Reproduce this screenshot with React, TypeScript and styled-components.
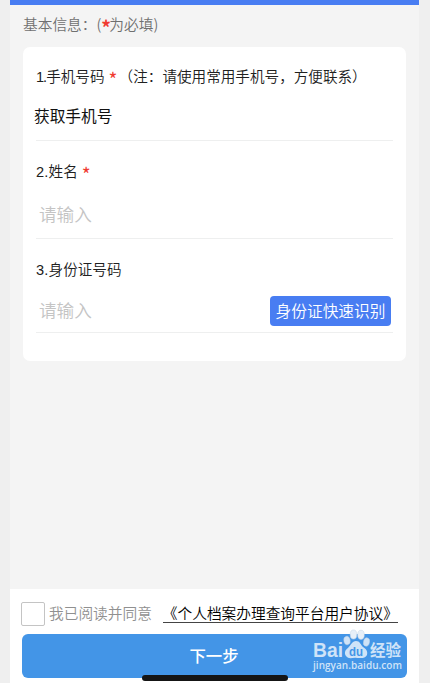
import React from "react";
import styled, { createGlobalStyle } from "styled-components";

const GlobalStyle = createGlobalStyle`
  * { box-sizing: border-box; }
  body {
    margin: 0;
    background: #efefef;
    font-family: "Liberation Sans", "Noto Sans CJK SC", sans-serif;
    overflow: hidden;
  }
`;

const Screen = styled.div`
  width: 409px;
  height: 683px;
  margin-left: 10px;
  display: flex;
  flex-direction: column;
  background: #f4f4f4;
  border-top: 5px solid #487df2;
`;

const Heading = styled.div`
  height: 42px;
  padding-left: 13px;
  font-family: "Noto Sans CJK SC", sans-serif;
  font-weight: 350;
  font-size: 14.7px;
  line-height: 38px;
  color: #707070;
  white-space: nowrap;
`;

const Star = styled.span<{ $bold?: boolean }>`
  display: inline-block;
  width: ${(p) => (p.$bold ? 8 : 9)}px;
  font-family: "Noto Sans CJK SC", sans-serif;
  font-size: 19px;
  font-weight: ${(p) => (p.$bold ? 700 : 400)};
  color: #f03a30;
  line-height: 10px;
  height: 10px;
  vertical-align: -5px;
`;

const Ordinal = styled.span<{ $narrow?: boolean }>`
  letter-spacing: ${(p) => (p.$narrow ? -1 : 0.2)}px;
`;

const Note = styled.span`
  margin-left: 1px;
`;

const Card = styled.main`
  width: 383px;
  height: 314px;
  margin-left: 13px;
  padding: 0 13px;
  border-radius: 7px;
  background: #fff;
`;

const Field = styled.section<{ $height: number }>`
  display: flex;
  flex-direction: column;
  height: ${(p) => p.$height}px;
  border-bottom: 1px solid #eeefef;
`;

const Label = styled.div<{ $top: number }>`
  height: 20px;
  margin-top: ${(p) => p.$top}px;
  font-size: 14.6px;
  font-weight: 350;
  line-height: 20px;
  color: #202020;
  white-space: pre;
`;

const PhoneValue = styled.div`
  margin: 18px 0 0 -2px;
  font-size: 15.7px;
  line-height: 24px;
  color: #111;
`;

const InputRow = styled.div<{ $top: number }>`
  display: flex;
  align-items: center;
  justify-content: space-between;
  height: 30px;
  margin-top: ${(p) => p.$top}px;
  padding: 0 2px 0 3px;
`;

const Input = styled.input`
  width: 180px;
  height: 26px;
  margin-bottom: 4px;
  padding: 0;
  border: 0;
  outline: 0;
  background: transparent;
  font: 350 17.6px "Noto Sans CJK SC", sans-serif;
  &::placeholder { color: #c4c4c4; }
`;

const ScanButton = styled.button`
  width: 121px;
  height: 30px;
  padding: 0;
  border: 0;
  border-radius: 4px;
  background: #487df2;
  color: #fff;
  font: 350 15.7px/28px "Noto Sans CJK SC", sans-serif;
  white-space: nowrap;
`;

const Footer = styled.footer`
  position: relative;
  height: 94px;
  margin-top: auto;
  padding: 12px 12px 0;
  background: #fff;
`;

const Agreement = styled.label`
  display: flex;
  align-items: center;
  height: 26px;
  margin-left: -1px;
  font-size: 14.7px;
  font-weight: 350;
  white-space: nowrap;
  color: #909090;
`;

const AgreementText = styled.span`
  height: 20px;
  line-height: 20px;
`;

const Checkbox = styled.input`
  appearance: none;
  width: 24px;
  height: 24px;
  margin: 0 4px 0 0;
  border: 1px solid #c4c4c4;
  border-radius: 2px;
  background: #fff;
`;

const AgreementLink = styled.a`
  height: 19px;
  margin: 0 0 2px 11px;
  border-bottom: 1px solid #444;
  line-height: 21px;
  color: #000;
`;

const NextButton = styled.button`
  display: block;
  width: 385px;
  height: 44px;
  margin-top: 7px;
  padding: 0 1px 2px 0;
  border: 0;
  border-radius: 6px;
  background: #4395e7;
  color: #fff;
  font: 500 16.4px/42px "Noto Sans CJK SC", sans-serif;
`;

const HomeIndicator = styled.div`
  position: absolute;
  left: 132px;
  bottom: 2px;
  width: 146px;
  height: 6px;
  border-radius: 3px;
  background: #151515;
`;

const Watermark = styled.svg`
  position: absolute;
  left: 300px;
  top: 39px;
  width: 98px;
  height: 50px;
`;

export default function App() {
  return (
    <>
      <GlobalStyle />
      <Screen>
        <Heading>基本信息：(<Star $bold>*</Star>为必填)</Heading>
        <Card>
          <Field $height={94}>
            <Label $top={20}>
              <Ordinal $narrow>1.</Ordinal>手机号码 <Star>*</Star>
              <Note>（注：请使用常用手机号，方便联系）</Note>
            </Label>
            <PhoneValue>获取手机号</PhoneValue>
          </Field>
          <Field $height={98}>
            <Label $top={21}><Ordinal>2.</Ordinal>姓名 <Star>*</Star></Label>
            <InputRow $top={18}><Input placeholder="请输入" /></InputRow>
          </Field>
          <Field $height={94}>
            <Label $top={21}><Ordinal>3.</Ordinal>身份证号码</Label>
            <InputRow $top={16}>
              <Input placeholder="请输入" />
              <ScanButton>身份证快速识别</ScanButton>
            </InputRow>
          </Field>
        </Card>
        <Footer>
          <Agreement>
            <Checkbox type="checkbox" />
            <AgreementText>我已阅读并同意</AgreementText>
            <AgreementLink>《个人档案办理查询平台用户协议》</AgreementLink>
          </Agreement>
          <NextButton>下一步</NextButton>
          <HomeIndicator />
          <Watermark viewBox="310 628 98 50" fill="#cfe3f8">
            <text x="313" y="656.5" fontFamily="Liberation Sans" fontWeight="700" fontSize="20" textLength="30" lengthAdjust="spacingAndGlyphs">Bai</text>
            <g stroke="#c3d3e4" strokeWidth="0.5">
              <ellipse cx="347" cy="640.5" rx="3.1" ry="4.2" transform="rotate(-12 347 640.5)" />
              <ellipse cx="353.5" cy="634.5" rx="3.3" ry="4.6" fill="#e7eff8" />
              <ellipse cx="361" cy="634.8" rx="3.3" ry="4.6" fill="#e7eff8" />
              <ellipse cx="366.5" cy="642" rx="3" ry="4.2" transform="rotate(12 366.5 642)" />
            </g>
            <path d="M356 641c-4 0-5 4-8 7-3 2-4 5-2 8 3 4 7 1 11 2 4 0 8 1 10-3 1-4-1-6-4-8-3-3-3-6-7-6Z" />
            <text x="349" y="655.5" fill="#4395e7" fontFamily="Liberation Sans" fontWeight="700" fontSize="12" textLength="14" lengthAdjust="spacingAndGlyphs">du</text>
            <text x="370" y="655.5" fontFamily="Noto Sans CJK SC" fontWeight="700" fontSize="15.5" textLength="31">经验</text>
            <text x="313" y="668.5" fontFamily="Open Sans" fontWeight="600" fontSize="10" textLength="89">jingyan.baidu.com</text>
          </Watermark>
        </Footer>
      </Screen>
    </>
  );
}
